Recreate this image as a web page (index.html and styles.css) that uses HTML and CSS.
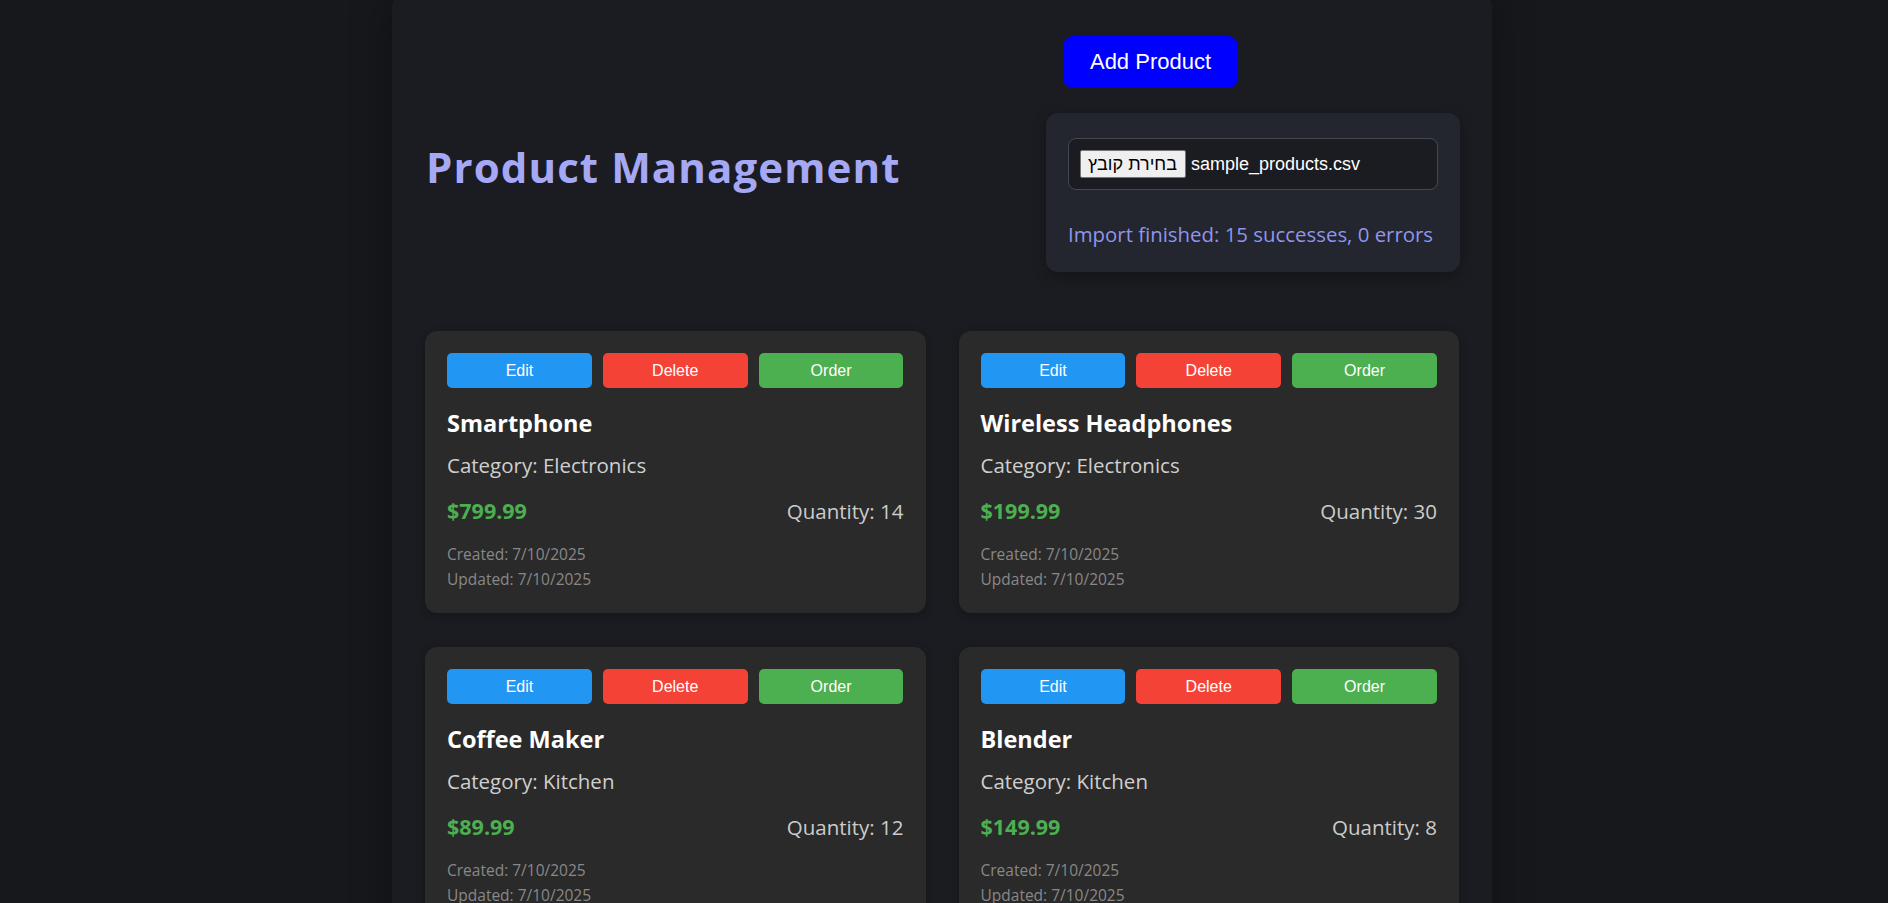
FILE: index.html
```html
<!DOCTYPE html>
<html lang="en">
<head>
<meta charset="utf-8">
<title>Product Management</title>
<link rel="stylesheet" href="styles.css">
</head>
<body>
<div class="container">
  <header class="header">
    <h1 class="title">Product Management</h1>
    <div class="header-actions">
      <button class="add-btn">Add Product</button>
      <div class="import-box">
        <div class="file-input">
          <span class="file-btn">בחירת קובץ</span>
          <span class="file-name">sample_products.csv</span>
        </div>
        <p class="import-msg">Import finished: 15 successes, 0 errors</p>
      </div>
    </div>
  </header>

  <main class="grid">
    <div class="card">
      <div class="card-actions">
        <button class="btn btn-edit">Edit</button>
        <button class="btn btn-delete">Delete</button>
        <button class="btn btn-order">Order</button>
      </div>
      <h3 class="card-title">Smartphone</h3>
      <p class="category">Category: Electronics</p>
      <div class="row">
        <span class="price">$799.99</span>
        <span class="qty">Quantity: 14</span>
      </div>
      <div class="dates">
        <div>Created: 7/10/2025</div>
        <div>Updated: 7/10/2025</div>
      </div>
    </div>

    <div class="card">
      <div class="card-actions">
        <button class="btn btn-edit">Edit</button>
        <button class="btn btn-delete">Delete</button>
        <button class="btn btn-order">Order</button>
      </div>
      <h3 class="card-title">Wireless Headphones</h3>
      <p class="category">Category: Electronics</p>
      <div class="row">
        <span class="price">$199.99</span>
        <span class="qty">Quantity: 30</span>
      </div>
      <div class="dates">
        <div>Created: 7/10/2025</div>
        <div>Updated: 7/10/2025</div>
      </div>
    </div>

    <div class="card">
      <div class="card-actions">
        <button class="btn btn-edit">Edit</button>
        <button class="btn btn-delete">Delete</button>
        <button class="btn btn-order">Order</button>
      </div>
      <h3 class="card-title">Coffee Maker</h3>
      <p class="category">Category: Kitchen</p>
      <div class="row">
        <span class="price">$89.99</span>
        <span class="qty">Quantity: 12</span>
      </div>
      <div class="dates">
        <div>Created: 7/10/2025</div>
        <div>Updated: 7/10/2025</div>
      </div>
    </div>

    <div class="card">
      <div class="card-actions">
        <button class="btn btn-edit">Edit</button>
        <button class="btn btn-delete">Delete</button>
        <button class="btn btn-order">Order</button>
      </div>
      <h3 class="card-title">Blender</h3>
      <p class="category">Category: Kitchen</p>
      <div class="row">
        <span class="price">$149.99</span>
        <span class="qty">Quantity: 8</span>
      </div>
      <div class="dates">
        <div>Created: 7/10/2025</div>
        <div>Updated: 7/10/2025</div>
      </div>
    </div>
  </main>
</div>
</body>
</html>
```
FILE: styles.css
```css
html {
  scrollbar-width: none;
}

body {
  margin: 0;
  padding-right: 4px;
  background: #17181c;
  font-family: "Open Sans", "Noto Sans", sans-serif;
  color: #e0e0e0;
}

.container {
  box-sizing: border-box;
  width: 1100px;
  margin: -5px auto 0;
  padding: 41px 33px 33px;
  background: #1b1c21;
  border-radius: 12px;
  box-shadow: 0 0 40px rgba(0, 0, 0, 0.35);
}

.header {
  display: flex;
  justify-content: space-between;
  align-items: flex-start;
}

.title {
  margin: 106px 0 0 1px;
  font-size: 42px;
  line-height: 50px;
  font-weight: 700;
  letter-spacing: 1.1px;
  color: #a5a9f5;
}

.header-actions {
  display: flex;
  flex-direction: column;
  align-items: flex-start;
  width: 414px;
  margin-right: -1px;
}

.add-btn {
  box-sizing: border-box;
  width: 175px;
  height: 52px;
  margin-left: 17px;
  border: none;
  border-radius: 10px;
  background: #0000ff;
  color: #ffffff;
  font-family: "Liberation Sans", Arial, sans-serif;
  font-size: 22px;
}

.import-box {
  box-sizing: border-box;
  width: 100%;
  margin-top: 25px;
  padding: 25px 22px 24px;
  background: #23252f;
  border-radius: 12px;
  box-shadow: 0 4px 14px rgba(0, 0, 0, 0.3);
}

.file-input {
  box-sizing: border-box;
  display: flex;
  align-items: center;
  height: 52px;
  padding: 0 11px;
  background: #1b1c21;
  border: 1px solid #45464e;
  border-radius: 8px;
  font-family: "Liberation Sans", Arial, sans-serif;
  font-size: 18px;
  color: #ffffff;
}

.file-btn {
  box-sizing: border-box;
  height: 28px;
  line-height: 26px;
  padding: 0 8px 0 7px;
  background: #efefef;
  color: #000000;
  border: 1px solid #767676;
  border-radius: 2px;
  margin-right: 5px;
}

.import-msg {
  margin: 30px 0 0;
  font-size: 20.4px;
  line-height: 28px;
  color: #8f96ea;
}

.grid {
  display: grid;
  grid-template-columns: 1fr 1fr;
  gap: 34px 33px;
  margin-top: 59px;
}

.card {
  padding: 22px 22px 21px;
  background: #2a2a2a;
  border-radius: 12px;
  box-shadow: 0 2px 8px rgba(0, 0, 0, 0.25);
}

.card-actions {
  display: flex;
  gap: 11px;
}

.btn {
  flex: 1;
  height: 35px;
  border: none;
  border-radius: 5px;
  color: #ffffff;
  font-family: "Liberation Sans", Arial, sans-serif;
  font-size: 16px;
}

.btn-edit { background: #2196f3; }
.btn-delete { background: #f44336; }
.btn-order { background: #4caf50; }

.card-title {
  margin: 20px 0 0;
  font-size: 23.5px;
  line-height: 30px;
  font-weight: 700;
  color: #ffffff;
}

.category {
  margin: 13px 0 0;
  font-size: 20.5px;
  line-height: 28px;
  color: #cfcfcf;
}

.row {
  display: flex;
  justify-content: space-between;
  align-items: baseline;
  margin-top: 18px;
  line-height: 28px;
}

.price {
  font-size: 21.5px;
  font-weight: 700;
  color: #4caf50;
}

.qty {
  font-size: 20.5px;
  color: #cccccc;
}

.dates {
  margin-top: 17px;
  font-size: 15.5px;
  line-height: 25px;
  color: #888888;
}
```
